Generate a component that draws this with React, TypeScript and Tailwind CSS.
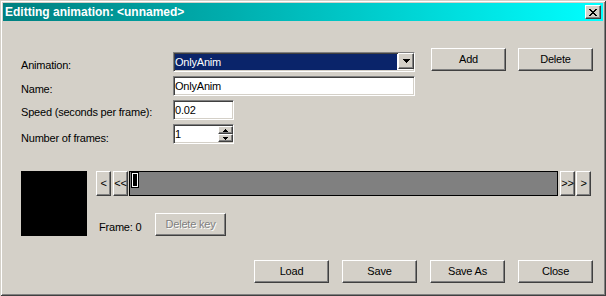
import type { ReactNode } from "react"

const raised =
  "border border-t-white border-l-white border-r-[#404040] border-b-[#404040] bg-[#d4d0c8] shadow-[inset_-1px_-1px_#808080]"
const sunken =
  "border border-t-[#808080] border-l-[#808080] border-r-white border-b-white bg-white shadow-[inset_1px_1px_#404040,inset_-1px_-1px_#d4d0c8]"

function Button({
  children,
  className = "",
  disabled = false,
}: {
  children: ReactNode
  className?: string
  disabled?: boolean
}) {
  return (
    <button
      type="button"
      className={`${raised} flex shrink-0 items-center justify-center leading-[13px] ${
        disabled
          ? "text-[#808080] [text-shadow:1px_1px_0_#ffffff]"
          : "text-black"
      } ${className}`}
    >
      {children}
    </button>
  )
}

// little pixel glyphs, drawn row by row
function Pixels({ rows }: { rows: string[] }) {
  const w = rows[0].length
  return (
    <svg width={w} height={rows.length} shapeRendering="crispEdges">
      {rows.map((row, y) =>
        row
          .split("")
          .map((c, x) =>
            c === "1" ? (
              <rect key={`${x}-${y}`} x={x} y={y} width={1} height={1} fill="#000" />
            ) : null
          )
      )}
    </svg>
  )
}

const closeGlyph = [
  "11000011",
  "01100110",
  "00111100",
  "00011000",
  "00111100",
  "01100110",
  "11000011",
]
const downArrow = ["1111111", "0111110", "0011100", "0001000"]
const spinUp = ["00100", "01110", "11111"]
const spinDown = ["11111", "01110", "00100"]

function Row({
  label,
  labelTop,
  children,
}: {
  label: string
  labelTop: string
  children: ReactNode
}) {
  return (
    <>
      <span className={labelTop}>{label}</span>
      <div className="flex">{children}</div>
    </>
  )
}

export default function App() {
  return (
    <div className="h-[296px] w-[606px] bg-[#d4d0c8] p-[3px] font-['Liberation_Sans',Arial,sans-serif] text-[11px] leading-[13px] text-black shadow-[inset_1px_1px_#d4d0c8,inset_-1px_-1px_#404040,inset_2px_2px_#ffffff,inset_-2px_-2px_#808080]">
      <div className="flex h-[18px] items-center justify-between bg-linear-to-r from-[#008080] to-[#00ffff] px-[2px]">
        <span className="text-[12px] font-bold text-white">
          Editting animation: &lt;unnamed&gt;
        </span>
        <Button className="h-[14px] w-[16px]">
          <Pixels rows={closeGlyph} />
        </Button>
      </div>

      <div className="pl-[18px] pr-[10px] pt-[27px] tracking-[-0.2px]">
        <div className="flex">
          <div className="mt-[4px] grid w-[394px] grid-cols-[152px_242px] gap-y-[4px]">
            <Row label="Animation:" labelTop="mt-[7px]">
              <div className={`${sunken} flex h-[20px] w-[242px]`}>
                <div className="m-[1px] flex flex-1 items-center bg-[#0a246a] text-white">
                  OnlyAnim
                </div>
                <Button className="h-[16px] w-[16px]">
                  <Pixels rows={downArrow} />
                </Button>
              </div>
            </Row>
            <Row label="Name:" labelTop="mt-[7px]">
              <div className={`${sunken} flex h-[20px] w-[242px] items-center pl-[1px]`}>
                OnlyAnim
              </div>
            </Row>
            <Row label="Speed (seconds per frame):" labelTop="mt-[6px]">
              <div className={`${sunken} flex h-[20px] w-[61px] items-center pl-[1px]`}>
                0.02
              </div>
            </Row>
            <Row label="Number of frames:" labelTop="mt-[8px]">
              <div className={`${sunken} flex h-[20px] w-[61px] items-center pl-[1px]`}>
                <span className="flex-1">1</span>
                <div className="flex flex-col">
                  <Button className="h-[8px] w-[15px]">
                    <Pixels rows={spinUp} />
                  </Button>
                  <Button className="h-[8px] w-[15px]">
                    <Pixels rows={spinDown} />
                  </Button>
                </div>
              </div>
            </Row>
          </div>
          <Button className="ml-[16px] h-[23px] w-[75px]">Add</Button>
          <Button className="ml-[12px] h-[23px] w-[75px]">Delete</Button>
        </div>

        <div className="mt-[26px] flex">
          <div className="h-[65px] w-[66px] bg-black" />
          <div className="ml-[9px] flex flex-col">
            <div className="flex h-[25px]">
              <Button className="w-[15px]">&lt;</Button>
              <Button className="ml-[2px] w-[15px]">&lt;&lt;</Button>
              <div className="ml-[1px] w-[429px] border border-black bg-[#808080]">
                <div className="ml-[1px] h-[16px] w-[8px] bg-black p-[1px]">
                  <div className="h-full border border-white" />
                </div>
              </div>
              <Button className="ml-[2px] w-[15px]">&gt;&gt;</Button>
              <Button className="ml-[1px] w-[15px]">&gt;</Button>
            </div>
            <div className="mt-[17px] flex">
              <span className="ml-[3px] mt-[8px] w-[56px]">Frame: 0</span>
              <Button disabled className="h-[23px] w-[71px]">
                Delete key
              </Button>
            </div>
          </div>
        </div>

        <div className="mt-[24px] flex justify-end gap-[13px]">
          <Button className="h-[23px] w-[75px]">Load</Button>
          <Button className="h-[23px] w-[75px]">Save</Button>
          <Button className="h-[23px] w-[75px]">Save As</Button>
          <Button className="h-[23px] w-[75px]">Close</Button>
        </div>
      </div>
    </div>
  )
}
